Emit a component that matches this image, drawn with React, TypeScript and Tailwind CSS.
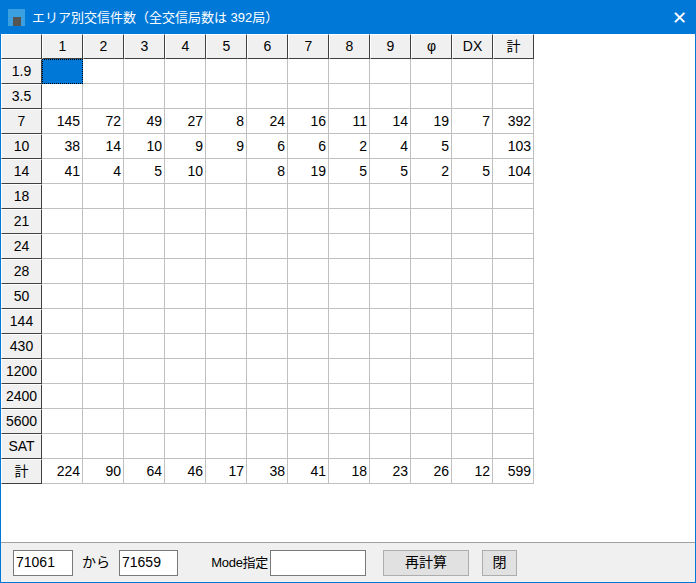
import React from "react";

const cols = ["1","2","3","4","5","6","7","8","9","φ","DX","計"];
const rows: [string, string[]][] = [
  ["1.9", []],["3.5", []],
  ["7", ["145","72","49","27","8","24","16","11","14","19","7","392"]],
  ["10", ["38","14","10","9","9","6","6","2","4","5","","103"]],
  ["14", ["41","4","5","10","","8","19","5","5","2","5","104"]],
  ["18", []],["21", []],["24", []],["28", []],["50", []],["144", []],["430", []],["1200", []],["2400", []],["5600", []],["SAT", []],
  ["計", ["224","90","64","46","17","38","41","18","23","26","12","599"]],
];

const hdr = "h-[25px] bg-[#f0f0f0] border-t border-l border-t-white border-l-white border-r border-b border-r-[#404040] border-b-[#404040] flex items-center justify-center text-[14px] text-black";

export default function App() {
  return (
    <div className="w-[696px] h-[583px] bg-[#0078d7] p-[1px] flex flex-col" style={{ fontFamily: '"Liberation Sans","Noto Sans CJK JP",sans-serif' }}>
      <div className="h-[33px] flex items-center pl-[7px] pr-[8px] text-white text-[13px]">
        <div className="w-[17px] h-[17px] bg-[#3aa0e0] mr-[7px] flex items-end justify-center"><div className="w-[8px] h-[9px] bg-[#555]" /></div>
        <span>エリア別交信件数（全交信局数は 392局）</span>
        <span className="ml-auto text-[18px] leading-none font-light">✕</span>
      </div>
      <div className="flex-1 bg-white flex flex-col">
        <div className="flex-1">
          <div className="grid grid-cols-[41px_repeat(12,41px)] w-max">
            <div className={hdr} />
            {cols.map(c => <div key={c} className={hdr}>{c}</div>)}
            {rows.map(([r, v]) => (
              <React.Fragment key={r}>
                <div className={hdr}>{r}</div>
                {cols.map((_, i) => (
                  <div key={i} className={`h-[25px] border-r border-b border-[#c0c0c0] flex items-center justify-end pr-[2px] text-[14px] text-black ${r === "1.9" && i === 0 ? "bg-[#0078d7] border border-dotted border-black" : ""}`}>{v[i] ?? ""}</div>
                ))}
              </React.Fragment>
            ))}
          </div>
        </div>
        <div className="h-[40px] bg-[#f0f0f0] border-t border-[#a0a0a0] flex items-center text-[14px] text-black">
          <div className="ml-[12px] w-[60px] h-[26px] bg-white border border-[#7a7a7a] flex items-center pl-[2px]">71061</div>
          <span className="w-[46px] text-center">から</span>
          <div className="w-[59px] h-[26px] bg-white border border-[#7a7a7a] flex items-center pl-[2px]">71659</div>
          <span className="w-[92px] text-right pr-[2px] text-[13px] tracking-[-0.3px]">Mode指定</span>
          <div className="w-[96px] h-[26px] bg-white border border-[#7a7a7a]" />
          <div className="ml-[17px] w-[86px] h-[26px] bg-[#e1e1e1] border border-[#adadad] flex items-center justify-center">再計算</div>
          <div className="ml-[13px] w-[35px] h-[26px] bg-[#e1e1e1] border border-[#adadad] flex items-center justify-center">閉</div>
        </div>
      </div>
    </div>
  );
}
